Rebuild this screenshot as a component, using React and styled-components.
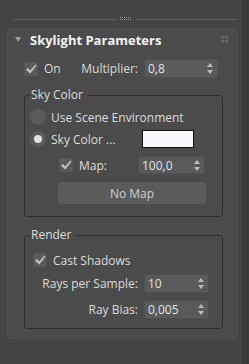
import styled, { createGlobalStyle } from 'styled-components'

const Global = createGlobalStyle`
    body {
        margin: 0;
        background: #444444;
        font-family: "Open Sans", "Noto Sans", sans-serif;
        font-size: 12px;
        color: #dcdcdc;
    }
`

const Screen = styled.div`
    display: flex;
    height: 364px;
    width: 249px;
    overflow: hidden;
`

const Main = styled.div`
    width: 242px;
    background: #444444;
`

const Scroll = styled.div`
    flex: 1;
    background: #3b3b3b;
`

const TopBar = styled.div`
    display: flex;
    align-items: center;
    height: 6px;
    margin: 16px 0 6px;
    padding: 0 5px 0 14px;
`

const Line = styled.div`
    flex: 1;
    height: 1px;
    background: #5e5e5e;
`

const Grip = styled.svg`
    margin: 0 4px 0 4px;
    width: 12px;
    height: 4px;
`

const Panel = styled.div`
    margin-left: 7px;
    width: 231px;
    height: 311px;
    box-sizing: border-box;
    background: #4b4b4b;
    border: 1px solid #505050;
    border-radius: 3px;
`

const TitleRow = styled.div`
    display: flex;
    align-items: center;
    height: 21px;
    padding: 0 8px 0 7px;
`

const Title = styled.div`
    flex: 1;
    margin-left: 9px;
    font-weight: 700;
    font-size: 13px;
    color: #f2f2f2;
`

const Row = styled.div`
    display: flex;
    align-items: center;
    height: 19px;
    margin-top: 9px;
    padding: 0 19px 0 16px;
`

const Spacer = styled.div`
    flex: 1;
`

const Label = styled.span`
    white-space: nowrap;
    text-align: ${p => p.right ? 'right' : 'left'};
`

const Check = styled.div`
    display: flex;
    align-items: center;
    gap: 6px;
    width: ${p => p.width || 'auto'};
`

const Box = styled.div`
    width: 14px;
    height: 14px;
    box-sizing: border-box;
    background: #5b5b5b;
    border: 1px solid #545454;
    display: flex;
    align-items: center;
    justify-content: center;
`

const SpinBox = styled.div`
    display: flex;
    align-items: center;
    box-sizing: border-box;
    width: ${p => p.width}px;
    height: ${p => p.height || 19}px;
    margin-left: ${p => p.gap || 0}px;
    padding: 0 4px 0 3px;
    background: #5a5a5a;
    border: 1px solid #4f4f4f;
    color: #dfe3f0;
`

const SpinValue = styled.span`
    flex: 1;
`

const Group = styled.fieldset`
    margin: ${p => p.top}px 0 0 16px;
    width: 199px;
    box-sizing: border-box;
    padding: ${p => p.padTop}px 0 ${p => p.padBottom}px 5px;
    border: 1px solid #2f2f2f;
    border-radius: 3px;
`

const Legend = styled.legend`
    padding: 0 5px 0 1px;
    line-height: 16px;
    color: #dcdcdc;
`

const RadioRow = styled.div`
    display: grid;
    grid-template-columns: ${p => p.cols || 'auto'};
    align-items: center;
    height: 22px;
`

const Radio = styled.div`
    display: flex;
    align-items: center;
    gap: 5px;
`

const Circle = styled.div`
    width: 16px;
    height: 16px;
    border-radius: 50%;
    background: #5b5b5b;
    display: flex;
    align-items: center;
    justify-content: center;

    &::after {
        content: '';
        width: 8px;
        height: 8px;
        border-radius: 50%;
        background: ${p => p.on ? '#e2e2e2' : 'transparent'};
    }
`

const Swatch = styled.div`
    width: 52px;
    height: 18px;
    box-sizing: border-box;
    background: #f8f8fc;
    border: 1px solid #111;
`

const MapRow = styled.div`
    display: flex;
    align-items: center;
    height: 30px;
    padding-left: 29px;
`

const Button = styled.div`
    margin: 2px 0 0 28px;
    width: 148px;
    height: 22px;
    border-radius: 4px;
    background: #5b5b5b;
    display: flex;
    align-items: center;
    justify-content: center;
    color: #cfcfcf;
`

const FieldRow = styled.div`
    display: grid;
    grid-template-columns: 108px 65px;
    column-gap: 6px;
    align-items: center;
    height: 20px;
    margin-top: ${p => p.top}px;
`

const CastRow = styled.div`
    display: flex;
    align-items: center;
    height: 22px;
    padding-left: 3px;
`

// heavy tick, thick on the short stroke, tapering to the top right
const Tick = () => (
    <svg width="12" height="12" viewBox="0 0 12 12">
        <path d="M1 6.5 L3 5 L5 7.5 L10.5 1.5 L11.5 2.5 L5.2 10.5 Z" fill="#c4c4c4" />
    </svg>
)

const Arrows = () => (
    <svg width="6" height="11" viewBox="0 0 6 11">
        <path d="M3 0 L6 4 L0 4 Z" fill="#bdbdbd" />
        <path d="M0 7 L6 7 L3 11 Z" fill="#bdbdbd" />
    </svg>
)

const Spinner = ({ value, width, height, gap }) => (
    <SpinBox width={width} height={height} gap={gap}>
        <SpinValue>{value}</SpinValue>
        <Arrows />
    </SpinBox>
)

const Dots = ({ cols, rows, color }) => {
    const dots = []
    for (let r = 0; r < rows; r++)
        for (let c = 0; c < cols; c++)
            dots.push(<rect key={r + '-' + c} x={c * 2} y={r * 2} width="1" height="1" fill={color} />)
    return dots
}

const App = () => {
    return (
        <Screen>
            <Global />
            <Main>
                <TopBar>
                    <Line />
                    <Grip viewBox="0 0 12 4"><Dots cols={6} rows={2} color="#9a9a9a" /></Grip>
                    <Line />
                </TopBar>
                <Panel>
                    <TitleRow>
                        <svg width="6" height="5" viewBox="0 0 6 5"><path d="M0 0 L6 0 L3 5 Z" fill="#9c9c9c" /></svg>
                        <Title>Skylight Parameters</Title>
                        <svg width="8" height="8" viewBox="0 0 8 8"><Dots cols={4} rows={4} color="#8a8a8a" /></svg>
                    </TitleRow>
                    <Row>
                        <Check>
                            <Box><Tick /></Box>
                            <Label>On</Label>
                        </Check>
                        <Spacer />
                        <Label>Multiplier:</Label>
                        <Spinner value="0,8" width={74} gap={6} />
                    </Row>

                    <Group top={9} padTop={3} padBottom={12}>
                        <Legend>Sky Color</Legend>
                        <RadioRow>
                            <Radio><Circle /><Label>Use Scene Environment</Label></Radio>
                        </RadioRow>
                        <RadioRow cols="112px 52px">
                            <Radio><Circle on /><Label>Sky Color ...</Label></Radio>
                            <Swatch />
                        </RadioRow>
                        <MapRow>
                            <Check width="79px">
                                <Box><Tick /></Box>
                                <Label>Map:</Label>
                            </Check>
                            <Spinner value="100,0" width={67} height={18} />
                        </MapRow>
                        <Button>No Map</Button>
                    </Group>

                    <Group top={10} padTop={6} padBottom={9}>
                        <Legend>Render</Legend>
                        <CastRow>
                            <Check>
                                <Box><Tick /></Box>
                                <Label>Cast Shadows</Label>
                            </Check>
                        </CastRow>
                        <FieldRow top={2}>
                            <Label right>Rays per Sample:</Label>
                            <Spinner value="10" width={65} />
                        </FieldRow>
                        <FieldRow top={6}>
                            <Label right>Ray Bias:</Label>
                            <Spinner value="0,005" width={65} />
                        </FieldRow>
                    </Group>
                </Panel>
            </Main>
            <Scroll />
        </Screen>
    )
}

export default App
